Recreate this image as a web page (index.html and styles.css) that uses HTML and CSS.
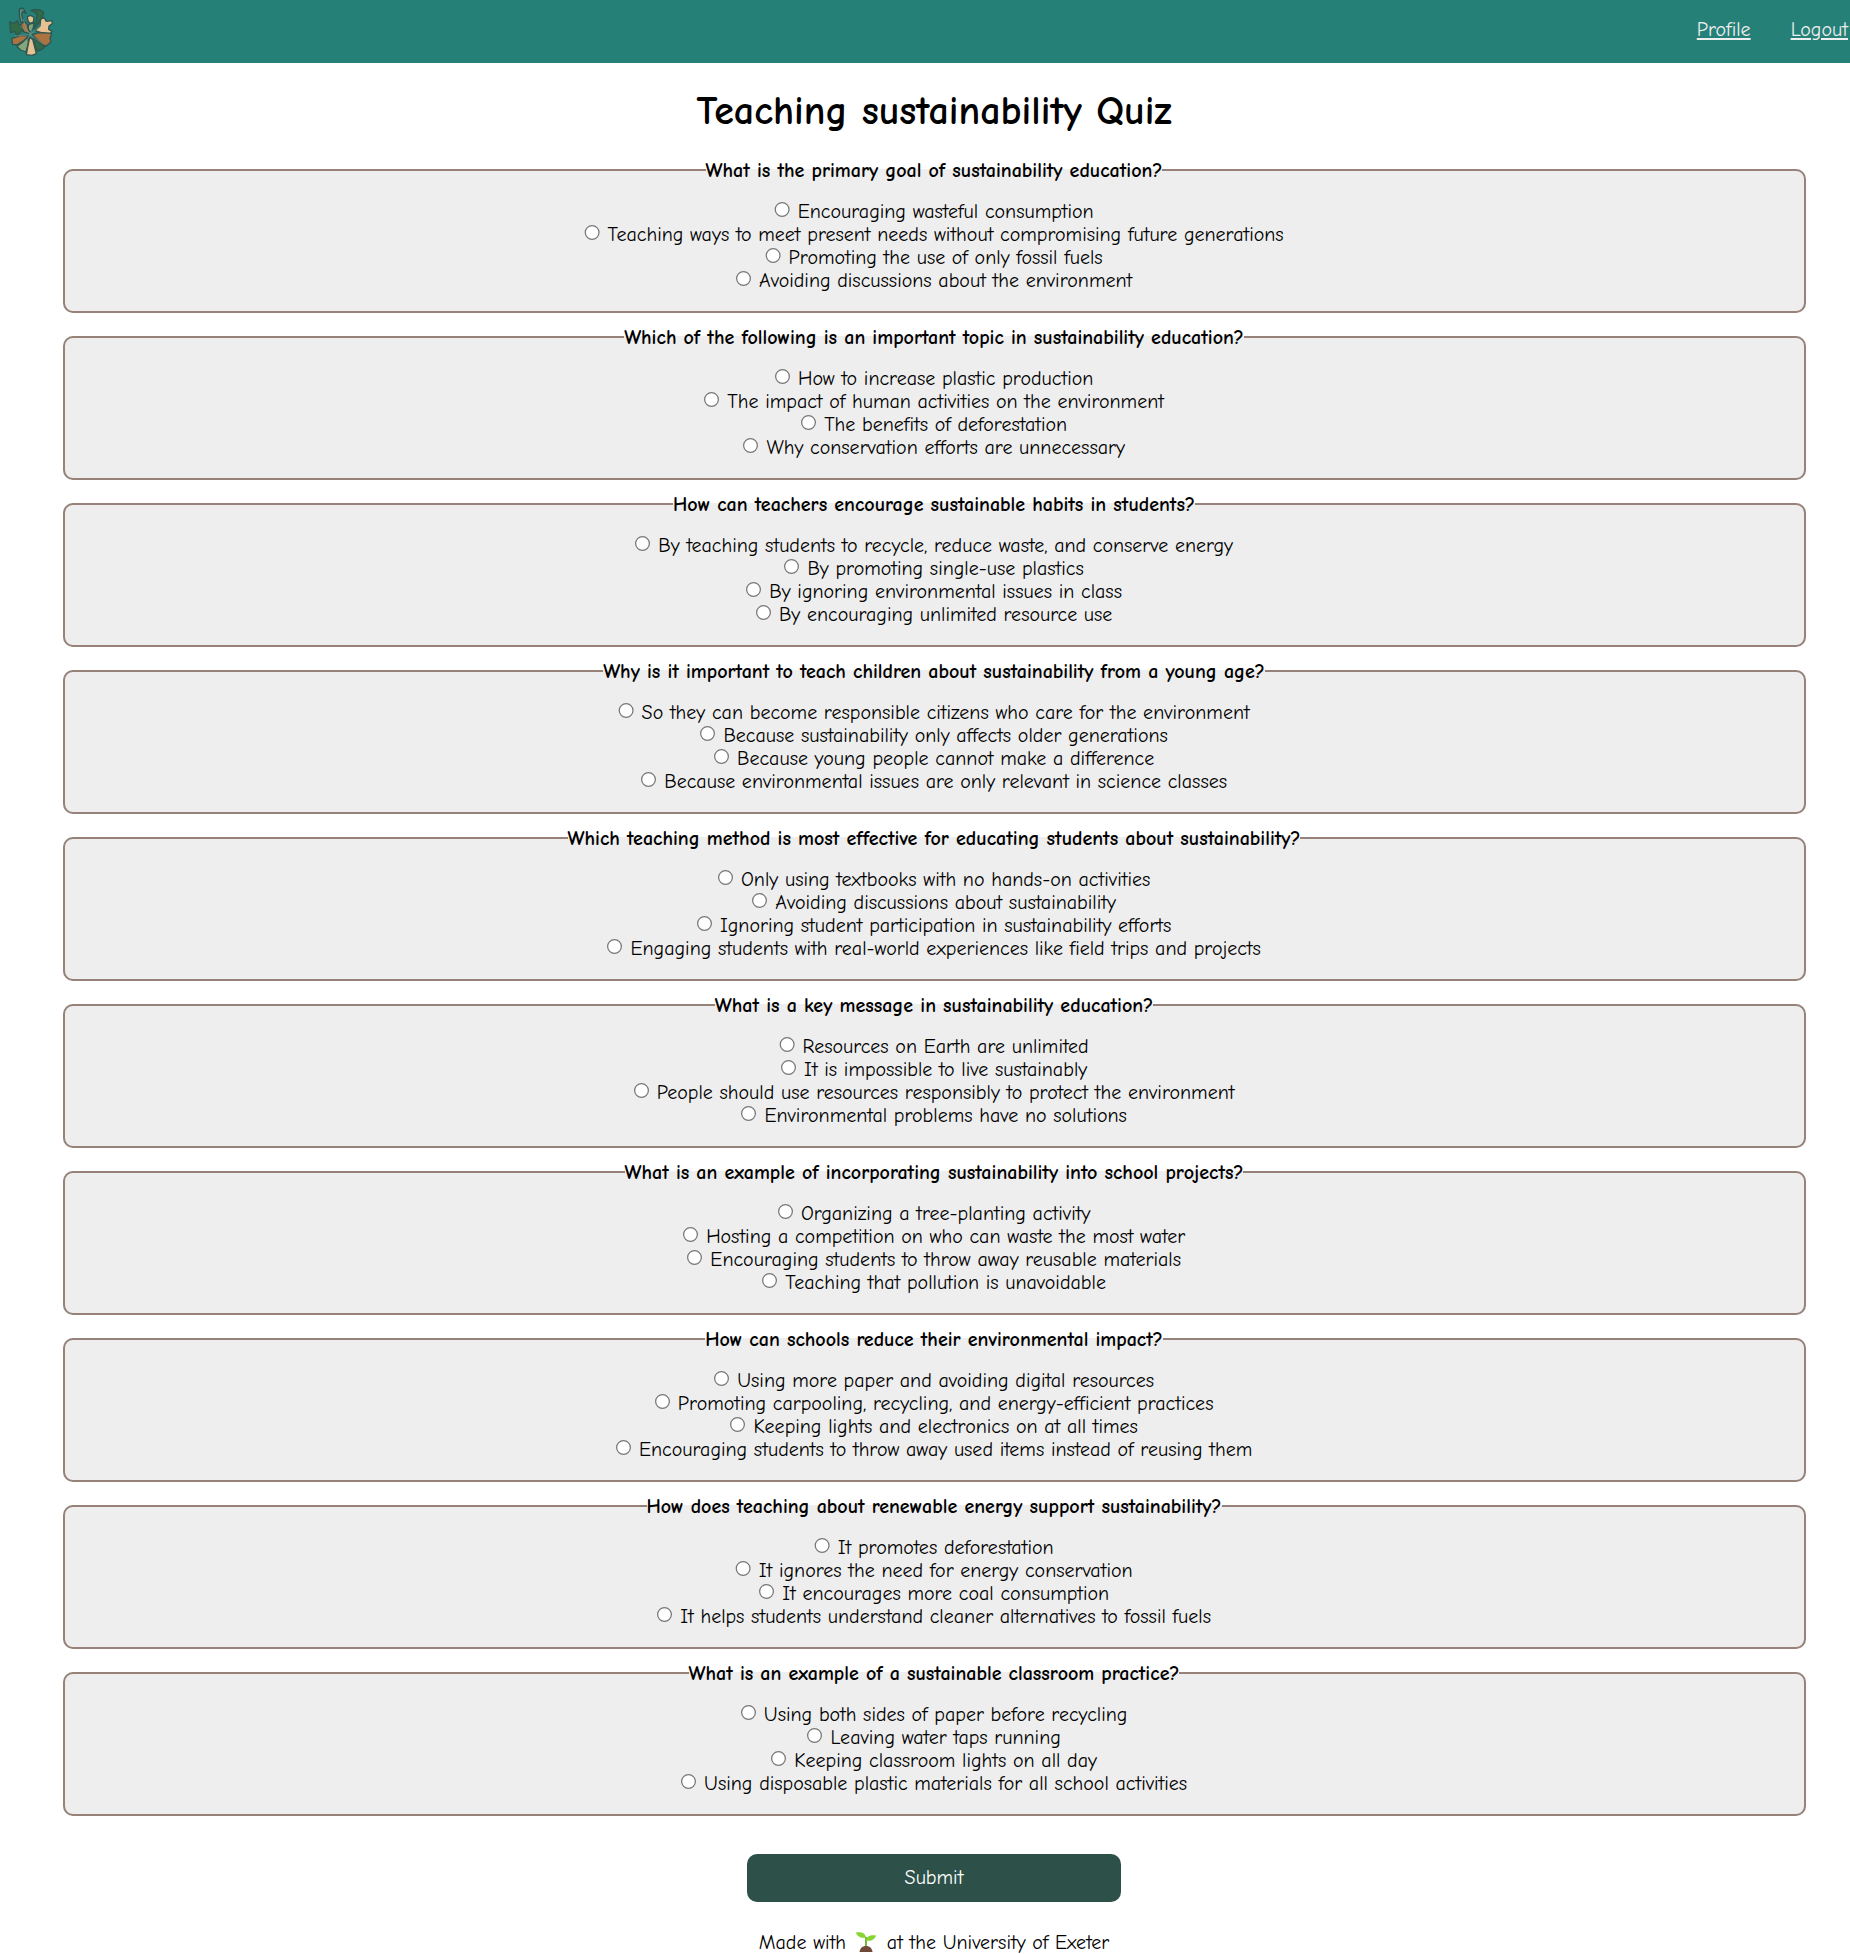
FILE: index.html
```html
<!DOCTYPE html>
<html lang="en">
<head>
<meta charset="utf-8">
<title>Teaching sustainability Quiz</title>
<link rel="stylesheet" href="styles.css">
</head>
<body>
<header class="navbar">
  <svg class="logo" viewBox="0 0 210 189" aria-label="Home">
    <g stroke="#2f5650" stroke-width="4" stroke-linejoin="round">
      <path fill="#e9c491" d="M84 62 82 50 92 46 102 52 100 66 90 70Z"/>
      <path fill="#2f6b47" d="M93 31 106 28 120 30 131 37 125 55 113 72 103 86 99 80 108 63 112 44 104 36Z"/>
      <path fill="#e9c293" d="M105 92 120 78 122 58 132 52 139 64 156 62 157 71 147 78 146 88 156 94 150 101 124 98Z"/>
      <path fill="#2f6b47" d="M29 66 42 70 52 62 58 76 72 88 60 98 51 107 44 94 32 98Z"/>
      <path fill="#83a77b" d="M86 74 102 68 99 84 91 98 84 86Z"/>
      <path fill="#ac7340" d="M62 75 72 64 81 72 88 101 72 96Z"/>
      <path fill="#ac7340" d="M97 104 118 98 155 100 150 116 153 126 138 139 119 125Z"/>
      <path fill="#ac7340" d="M86 107 61 107 35 116 38 134 52 134 72 122Z"/>
      <path fill="#83a77b" d="M84 112 66 128 50 139 62 150 78 156 85 130Z"/>
      <path fill="#2f6b47" d="M101 113 118 128 134 141 126 148 112 153 105 136Z"/>
      <path fill="#e9c293" d="M89 112 98 118 109 161 96 166 79 164 83 142Z"/>
      <path fill="#5c8d7f" d="M58 27 67 24 73 30 78 40 68 34 65 44 71 64 63 68 58 48Z"/>
    </g>
    <path fill="none" stroke="#7d9d8c" stroke-width="2" d="M70 58 78 86 92 102 122 78M44 108 90 104 132 134M92 104 76 124M60 78 92 102 98 74"/>
  </svg>
  <nav class="links"><a href="#">Profile</a><a href="#">Logout</a></nav>
</header>
<main>
<h1>Teaching sustainability Quiz</h1>
<form class="quiz">
<fieldset><legend>What is the primary goal of sustainability education?</legend>
<label><input type="radio" name="q1"> Encouraging wasteful consumption</label>
<label><input type="radio" name="q1"> Teaching ways to meet present needs without compromising future generations</label>
<label><input type="radio" name="q1"> Promoting the use of only fossil fuels</label>
<label><input type="radio" name="q1"> Avoiding discussions about the environment</label></fieldset>
<fieldset><legend>Which of the following is an important topic in sustainability education?</legend>
<label><input type="radio" name="q2"> How to increase plastic production</label>
<label><input type="radio" name="q2"> The impact of human activities on the environment</label>
<label><input type="radio" name="q2"> The benefits of deforestation</label>
<label><input type="radio" name="q2"> Why conservation efforts are unnecessary</label></fieldset>
<fieldset><legend>How can teachers encourage sustainable habits in students?</legend>
<label><input type="radio" name="q3"> By teaching students to recycle, reduce waste, and conserve energy</label>
<label><input type="radio" name="q3"> By promoting single-use plastics</label>
<label><input type="radio" name="q3"> By ignoring environmental issues in class</label>
<label><input type="radio" name="q3"> By encouraging unlimited resource use</label></fieldset>
<fieldset><legend>Why is it important to teach children about sustainability from a young age?</legend>
<label><input type="radio" name="q4"> So they can become responsible citizens who care for the environment</label>
<label><input type="radio" name="q4"> Because sustainability only affects older generations</label>
<label><input type="radio" name="q4"> Because young people cannot make a difference</label>
<label><input type="radio" name="q4"> Because environmental issues are only relevant in science classes</label></fieldset>
<fieldset><legend>Which teaching method is most effective for educating students about sustainability?</legend>
<label><input type="radio" name="q5"> Only using textbooks with no hands-on activities</label>
<label><input type="radio" name="q5"> Avoiding discussions about sustainability</label>
<label><input type="radio" name="q5"> Ignoring student participation in sustainability efforts</label>
<label><input type="radio" name="q5"> Engaging students with real-world experiences like field trips and projects</label></fieldset>
<fieldset><legend>What is a key message in sustainability education?</legend>
<label><input type="radio" name="q6"> Resources on Earth are unlimited</label>
<label><input type="radio" name="q6"> It is impossible to live sustainably</label>
<label><input type="radio" name="q6"> People should use resources responsibly to protect the environment</label>
<label><input type="radio" name="q6"> Environmental problems have no solutions</label></fieldset>
<fieldset><legend>What is an example of incorporating sustainability into school projects?</legend>
<label><input type="radio" name="q7"> Organizing a tree-planting activity</label>
<label><input type="radio" name="q7"> Hosting a competition on who can waste the most water</label>
<label><input type="radio" name="q7"> Encouraging students to throw away reusable materials</label>
<label><input type="radio" name="q7"> Teaching that pollution is unavoidable</label></fieldset>
<fieldset><legend>How can schools reduce their environmental impact?</legend>
<label><input type="radio" name="q8"> Using more paper and avoiding digital resources</label>
<label><input type="radio" name="q8"> Promoting carpooling, recycling, and energy-efficient practices</label>
<label><input type="radio" name="q8"> Keeping lights and electronics on at all times</label>
<label><input type="radio" name="q8"> Encouraging students to throw away used items instead of reusing them</label></fieldset>
<fieldset><legend>How does teaching about renewable energy support sustainability?</legend>
<label><input type="radio" name="q9"> It promotes deforestation</label>
<label><input type="radio" name="q9"> It ignores the need for energy conservation</label>
<label><input type="radio" name="q9"> It encourages more coal consumption</label>
<label><input type="radio" name="q9"> It helps students understand cleaner alternatives to fossil fuels</label></fieldset>
<fieldset><legend>What is an example of a sustainable classroom practice?</legend>
<label><input type="radio" name="q10"> Using both sides of paper before recycling</label>
<label><input type="radio" name="q10"> Leaving water taps running</label>
<label><input type="radio" name="q10"> Keeping classroom lights on all day</label>
<label><input type="radio" name="q10"> Using disposable plastic materials for all school activities</label></fieldset>
<button class="submit" type="button">Submit</button>
</form>
</main>
<footer class="footer">
  <span>Made with</span>
  <svg class="sprout" viewBox="0 0 20 20" aria-hidden="true">
    <path fill="#77b53a" d="M9 5h2v10H9z"/>
    <path fill="#86d62f" d="M0 .5C5-.5 9.500 1 10 5.500 5 6.500 1 4.500 0 .5ZM20 3.500C15 2.500 10.500 4 10 8.500 15 9.500 19 7.500 20 3.500Z"/>
    <path fill="#70493a" d="M3.500 20C4 16 6.500 14 10 14s6 2 6.500 6Z"/>
  </svg>
  <span>at the University of Exeter</span>
</footer>
</body>
</html>
```
FILE: styles.css
```css
* { box-sizing: border-box; }

body {
  margin: 0;
  background: #fff;
  color: #000;
  font: 20px/23px "Comic Neue", Lato, sans-serif;
  height: 1954px;
  overflow: hidden;
}

.navbar {
  display: flex;
  justify-content: space-between;
  align-items: flex-start;
  height: 63px;
  background: #258078;
}

.logo { width: 70px; height: 63px; }

.links { display: flex; gap: 40px; padding: 18px 2px 0 0; }

.links a {
  color: #eee;
  text-decoration-thickness: 2px;
  text-underline-offset: 2px;
}

h1 {
  margin: 25px 0;
  padding-left: 18px;
  font-size: 40px;
  line-height: 46px;
  font-weight: 700;
  text-align: center;
}

.quiz { padding: 0 44.5px 0 62.5px; text-align: center; }

fieldset {
  margin: 0 0 13px;
  padding: 19px 0;
  border: 2px solid #968278;
  border-radius: 10px;
  background: #eee;
}

legend {
  height: 22px;
  margin: 0 auto;
  padding: 0;
  font-weight: 700;
}

label { display: block; height: 23px; }

input[type="radio"] { zoom: 1.25; margin: 0 0.3px 0 0; }

.submit {
  display: block;
  width: 374px;
  height: 48px;
  margin: 38px auto 0;
  padding: 0 0 2px;
  border: 0;
  border-radius: 10px;
  background: #2d5149;
  color: #fff;
  font: inherit;
}

.footer {
  display: flex;
  justify-content: center;
  align-items: center;
  padding: 29px 0 0 18px;
}

.sprout { width: 20px; height: 20px; margin: 0 10.4px 2px; }
```
